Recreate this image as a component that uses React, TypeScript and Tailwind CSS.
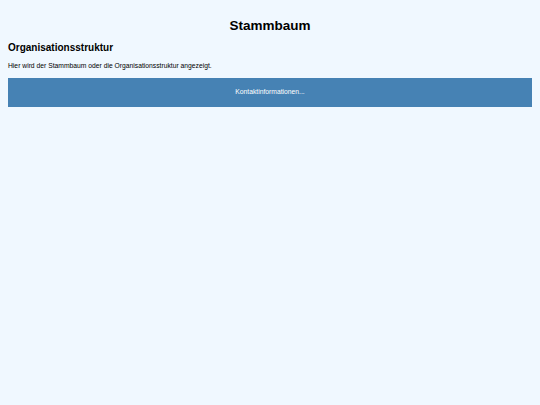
export default function App() {
  return (
    <div className="min-h-screen w-full bg-[#f0f8ff] px-2 text-black [font-family:'Liberation_Sans',Arial,sans-serif]">
      <h1 className="pt-[18px] text-center text-[13.5px] font-bold leading-[15px]">
        Stammbaum
      </h1>
      <h2 className="mt-[9px] text-[10px] font-bold leading-[12px]">
        Organisationsstruktur
      </h2>
      <p className="mt-[8px] text-[6.75px] leading-[8px]">
        Hier wird der Stammbaum oder die Organisationsstruktur angezeigt.
      </p>
      <footer className="mt-[8px] flex h-[29px] items-center justify-center bg-[#4682b4] text-[6.75px] text-white">
        Kontaktinformationen...
      </footer>
    </div>
  );
}
